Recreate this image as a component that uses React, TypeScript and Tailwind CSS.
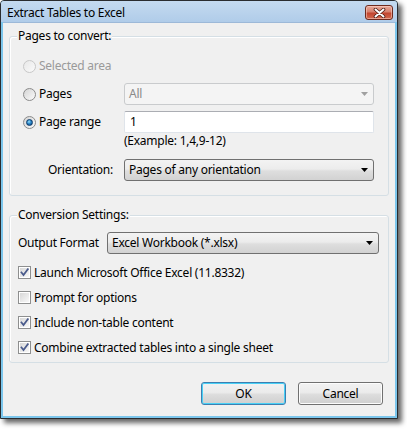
import React from "react";

const FONT = { fontFamily: '"Noto Sans", "Open Sans", Arial, sans-serif' };

function Radio({ checked = false, disabled = false }: { checked?: boolean; disabled?: boolean }) {
  return (
    <div
      className={
        "w-[13px] h-[13px] rounded-full border flex items-center justify-center shrink-0 " +
        (disabled
          ? "border-[#c8c8c8] bg-[linear-gradient(135deg,#e8e8e8,#fafafa)]"
          : "border-[#8b8b8b] bg-[linear-gradient(135deg,#d4d4d4,#fbfbfb)]")
      }
    >
      {checked && (
        <div className="w-[7px] h-[7px] rounded-full bg-[radial-gradient(circle_at_40%_35%,#9be0fb_0%,#2a86c8_45%,#0c3f78_100%)] border border-[#0b3a6a]" />
      )}
    </div>
  );
}

function Check({ checked = false }: { checked?: boolean }) {
  return (
    <div className="w-[13px] h-[13px] border border-[#8e8f8f] bg-white p-[1px] shrink-0">
      <div className="w-full h-full bg-[linear-gradient(135deg,#d8d8d8,#f8f8f8)] relative">
        {checked && (
          <svg width="11" height="11" viewBox="0 0 11 11" className="absolute left-[-1px] top-[-1px]">
            <path d="M2.5 5.5 L4.5 8 L8.8 2.2" fill="none" stroke="#4a5b8c" strokeWidth="1.8" strokeLinecap="square" />
          </svg>
        )}
      </div>
    </div>
  );
}

function Arrow({ color = "#000" }: { color?: string }) {
  return (
    <svg width="7" height="4" viewBox="0 0 7 4">
      <path d="M0 0 H7 L3.5 4 Z" fill={color} />
    </svg>
  );
}

function Combo({ text, width, disabled = false }: { text: string; width: string; disabled?: boolean }) {
  return (
    <div
      className={
        width +
        " h-[22px] rounded-[3px] border flex items-center justify-between pl-[4px] pr-[5px] " +
        (disabled
          ? "border-[#c9cbcd] bg-[#f4f4f4] text-[#8a8a8a]"
          : "border-[#707070] bg-[linear-gradient(#f3f3f3_0%,#ececec_45%,#dedede_55%,#d2d2d2_100%)] text-black")
      }
    >
      <span className="leading-[16px]">{text}</span>
      <Arrow color={disabled ? "#a0a0a0" : "#000"} />
    </div>
  );
}

function Group({ title, className, children }: { title: string; className: string; children: React.ReactNode }) {
  return (
    <div className={"relative border border-[#d5dfe5] rounded-[3px] shadow-[inset_1px_1px_0_#ffffff] " + className}>
      <span className="absolute left-[7px] top-[-9px] px-[1px] bg-[#f0f0f0] leading-[16px]">{title}</span>
      {children}
    </div>
  );
}

function Button({ label, focused = false }: { label: string; focused?: boolean }) {
  return (
    <div
      className={
        "w-[85px] h-[23px] rounded-[3px] border flex items-center justify-center leading-[16px] bg-[linear-gradient(#f2f2f2_0%,#ebebeb_45%,#dddddd_55%,#cfcfcf_100%)] " +
        (focused
          ? "border-[#3c7fb1] shadow-[inset_0_0_0_1px_#48d0f6]"
          : "border-[#707070] shadow-[inset_0_0_0_1px_#fcfcfc]")
      }
    >
      {label}
    </div>
  );
}

export default function App() {
  return (
    <div className="w-[407px] h-[429px] bg-white text-[12px] tracking-[-0.25px] text-black" style={FONT}>
      <div className="w-[398px] h-[419px] flex flex-col border border-[#2a2c2f] rounded-t-[4px] overflow-hidden bg-[#7cc6ec] shadow-[4px_4px_5px_rgba(0,0,0,0.6)]">
        {/* Title bar */}
        <div className="h-[21px] shrink-0 flex items-start justify-between pl-[6px] pr-[4px] bg-[linear-gradient(#c4daf0,#b0cce9)]">
          <span className="mt-[4px] leading-[16px]">Extract Tables to Excel</span>
          <div className="mt-[4px] w-[28px] h-[15px] rounded-[3px] border border-[#6e2a1e] flex items-center justify-center bg-[linear-gradient(#e9a99a_0%,#d6806d_45%,#c2452f_55%,#d36a4f_100%)] shadow-[inset_0_0_0_1px_rgba(255,220,210,0.5)]">
            <svg width="13" height="10" viewBox="0 0 13 10">
              <path d="M2.5 1.5 L10.5 8.5 M10.5 1.5 L2.5 8.5" stroke="#4b1a12" strokeWidth="3.6" strokeLinecap="round" />
              <path d="M2.5 1.5 L10.5 8.5 M10.5 1.5 L2.5 8.5" stroke="#ffffff" strokeWidth="2" strokeLinecap="round" />
            </svg>
          </div>
        </div>
        {/* Client */}
        <div className="flex-1 mx-[2px] mb-[2px] bg-[#f0f0f0] flex flex-col px-[6px] border-t border-[#9db9d8]">
          <Group title="Pages to convert:" className="mt-[13px] h-[160px] pt-[18px] pl-[13px] flex flex-col">
            <div className="h-[22px] flex items-center text-[#9a9a9a]">
              <Radio disabled />
              <span className="ml-[3px] leading-[16px]">Selected area</span>
            </div>
            <div className="h-[22px] mt-[6px] flex items-center">
              <div className="w-[101px] flex items-center">
                <Radio />
                <span className="ml-[3px] leading-[16px]">Pages</span>
              </div>
              <Combo text="All" width="w-[250px]" disabled />
            </div>
            <div className="h-[22px] mt-[6px] flex items-center">
              <div className="w-[101px] flex items-center">
                <Radio checked />
                <span className="ml-[3px] leading-[16px]">Page range</span>
              </div>
              <div className="w-[250px] h-[22px] border border-[#dfe4ea] border-t-[#abadb3] rounded-[2px] bg-white flex items-center pl-[5px] leading-[16px]">
                1
              </div>
            </div>
            <div className="h-[14px] mt-[1px] pl-[101px] flex items-center leading-[14px]">(Example: 1,4,9-12)</div>
            <div className="h-[22px] mt-[11px] flex items-center">
              <div className="w-[101px] flex justify-end pr-[11px] leading-[16px]">Orientation:</div>
              <Combo text="Pages of any orientation" width="w-[250px]" />
            </div>
          </Group>
          <Group title="Conversion Settings:" className="mt-[19px] h-[148px] pt-[16px] pl-[8px] flex flex-col">
            <div className="h-[22px] flex items-center">
              <div className="w-[89px] leading-[16px]">Output Format</div>
              <Combo text="Excel Workbook (*.xlsx)" width="w-[272px]" />
            </div>
            <div className="mt-[6px] flex flex-col">
              {[
                ["Launch Microsoft Office Excel (11.8332)", true],
                ["Prompt for options", false],
                ["Include non-table content", true],
                ["Combine extracted tables into a single sheet", true],
              ].map(([label, checked]) => (
                <div key={label as string} className="h-[25px] flex items-center">
                  <Check checked={checked as boolean} />
                  <span className="ml-[3px] leading-[16px]">{label as string}</span>
                </div>
              ))}
            </div>
          </Group>
          <div className="mt-[19px] flex justify-end gap-[12px] pr-[6px]">
            <Button label="OK" focused />
            <Button label="Cancel" />
          </div>
        </div>
      </div>
    </div>
  );
}
